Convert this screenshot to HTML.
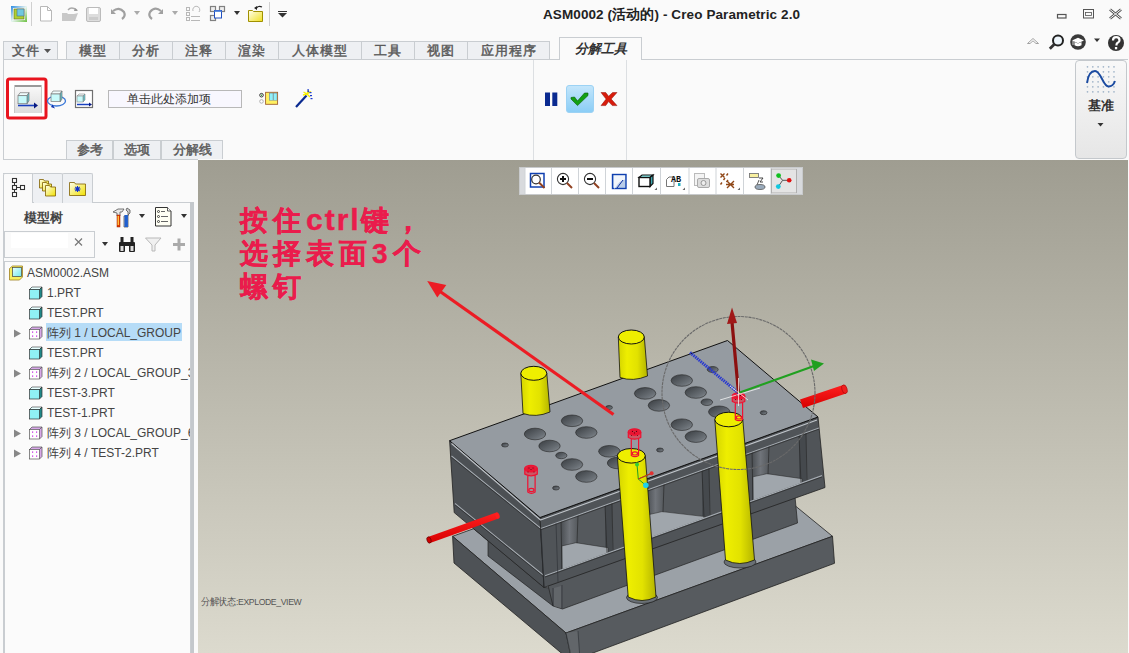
<!DOCTYPE html>
<html><head><meta charset="utf-8">
<style>
*{margin:0;padding:0;box-sizing:border-box}
html,body{width:1129px;height:653px;overflow:hidden;background:#fafafa;font-family:"Liberation Sans",sans-serif;color:#333}
.abs{position:absolute}
.tab{position:absolute;top:41px;height:18px;background:#eef0f3;border-left:1px solid #c9cdd1;border-top:1px solid #c9cdd1;font-size:13px;color:#5a5a5a;text-align:center;line-height:17px;font-weight:normal;-webkit-text-stroke:.45px #5a5a5a;letter-spacing:1px}
.btab{position:absolute;top:140px;height:19px;background:#eef0f3;border:1px solid #c9cdd1;border-bottom:none;font-size:13px;color:#5a5a5a;text-align:center;line-height:18px;font-weight:normal;-webkit-text-stroke:.45px #5a5a5a}
.row{position:absolute;left:0;height:20px;font-size:12px;color:#444;line-height:23px;white-space:nowrap}
</style></head><body>
<!-- title bar -->
<div class="abs" style="left:543px;top:6px;font-size:13.5px;font-weight:bold;color:#222;letter-spacing:.1px;white-space:nowrap">ASM0002 (活动的) - Creo Parametric 2.0</div>

<!-- quick access toolbar -->
<svg class="abs" style="left:0;top:0" width="300" height="30">
 <defs>
  <linearGradient id="gapp" x1="0" y1="0" x2="1" y2="1"><stop offset="0" stop-color="#2a8ae0"/><stop offset=".5" stop-color="#e8f4f0"/><stop offset="1" stop-color="#6cc040"/></linearGradient>
  <linearGradient id="gfold" x1="0" y1="0" x2="1" y2="1"><stop offset="0" stop-color="#fffff0"/><stop offset="1" stop-color="#f0e020"/></linearGradient>
 </defs>
 <rect x="11" y="6" width="16" height="16" fill="url(#gapp)"/>
 <rect x="13" y="8" width="12" height="12" fill="#f4f8f4"/>
 <rect x="14" y="9" width="10" height="10" fill="#b0d030" stroke="#607020" stroke-width=".6"/>
 <rect x="17" y="9" width="7" height="7" fill="#70c8e0" stroke="#507080" stroke-width=".6"/>
 <rect x="31" y="2" width="1" height="24" fill="#d0d0d0"/>
 <path d="M40.5 6.5h7l4 4v10.5h-11z" fill="#fff" stroke="#b8b8b8"/>
 <path d="M47.5 6.5v4h4" fill="none" stroke="#b8b8b8"/>
 <path d="M62 13h5l1 1h6l4 -1-3 8h-13z" fill="#c8c8c8"/>
 <path d="M68 10q3-4 9 0" fill="none" stroke="#aaa" stroke-width="1.3"/><path d="M75 8l3 3l-4 0z" fill="#999"/>
 <rect x="86.5" y="7.5" width="14" height="14" rx="1.5" fill="#ddd" stroke="#bbb"/>
 <rect x="89" y="8" width="9" height="6" fill="#fff"/><rect x="89" y="17" width="9" height="3" fill="#ccc"/>
 <path d="M113 11q6-5 11 1q2 4-2 7" fill="none" stroke="#a0a0a0" stroke-width="2.2"/><path d="M111 9v5h5z" fill="#a0a0a0"/>
 <path d="M134 11h6l-3 4z" fill="#aaa"/>
 <path d="M161 11q-6-5-11 1q-2 4 2 7" fill="none" stroke="#a0a0a0" stroke-width="2.2"/><path d="M163 9v5h-5z" fill="#a0a0a0"/>
 <path d="M172 11h6l-3 4z" fill="#aaa"/>
 <g fill="none" stroke="#b8b8b8" stroke-width="1"><rect x="186.5" y="7.5" width="3" height="3"/><rect x="186.5" y="12.5" width="3" height="3"/><rect x="186.5" y="17.5" width="3" height="3"/><path d="M191 16.5h9M191 20.5h9"/><path d="M193 11a3.5 3.5 0 1 1 6 1"/></g>
 <g fill="#eee" stroke="#808080" stroke-width="1.2"><rect x="210.5" y="6.5" width="5" height="5"/><rect x="219.5" y="6.5" width="5" height="5"/><rect x="210.5" y="15.5" width="5" height="5"/></g>
 <rect x="214.5" y="10.5" width="7" height="7.5" fill="#fff" stroke="#2050c0"/><rect x="214.5" y="10.5" width="7" height="1.5" fill="#6090e0"/>
 <path d="M234 11h6l-3 4z" fill="#333"/>
 <path d="M248.5 10.5h4l1 1h9v10h-14z" fill="url(#gfold)" stroke="#a09000"/>
 <path d="M256 9q2-4 6-2" fill="none" stroke="#222" stroke-width="1.2"/><path d="M254 8l3 -2v4z" fill="#222"/>
 <rect x="269" y="2" width="1" height="24" fill="#d0d0d0"/>
 <rect x="278" y="11" width="9" height="1" fill="#333"/><path d="M278 13h9l-4.5 4.5z" fill="#333"/>
</svg>

<!-- window controls -->
<svg class="abs" style="left:1020px;top:0" width="109" height="60">
 <rect x="37.5" y="14.5" width="8.5" height="3.5" fill="none" stroke="#555" stroke-width="1.2"/>
 <rect x="63.5" y="9.5" width="10" height="8.5" fill="none" stroke="#555"/><rect x="65.5" y="12.5" width="6" height="3" fill="none" stroke="#555" stroke-width=".8"/>
 <path d="M90 9.5l11 9M101 9.5l-11 9" stroke="#555" stroke-width="2.8"/><path d="M90 9.5l11 9M101 9.5l-11 9" stroke="#fafafa" stroke-width="1"/>
 <path d="M7.5 43.5l5.5-5 5.5 5h-2.5l-3-2.7-3 2.7z" fill="#fff" stroke="#999" stroke-width=".9"/>
 <circle cx="38" cy="40.5" r="5" fill="#eef6fc" stroke="#222" stroke-width="2"/><path d="M34.3 44.2l-4.5 4.5" stroke="#333" stroke-width="2.8"/>
 <circle cx="58" cy="42" r="7.8" fill="#3a3a3a"/><path d="M52 40.5l6-2.8 6 2.8-6 2.8z" fill="#fff"/><path d="M54.5 42v3.2q3.5 2 7 0v-3.2l-3.5 1.6z" fill="#fff"/><path d="M53 41v4" stroke="#fff" stroke-width=".8"/>
 <path d="M74 38.5h6l-3 3.5z" fill="#333"/>
 <circle cx="96" cy="43" r="8" fill="#333"/>
 <path d="M93 40.5q0-3.3 3.2-3.3q3.3 0 3.3 3q0 1.7-1.8 2.6q-1.2.6-1.2 2v.7" fill="none" stroke="#fff" stroke-width="2.2"/>
 <rect x="94.9" y="47" width="2.3" height="2.3" fill="#fff"/>
</svg>

<!-- tabs -->
<div class="tab" style="left:3px;width:55px;border-right:1px solid #c9cdd1"><span style="position:relative;left:-5px">文件</span><svg style="position:absolute;left:40px;top:7px" width="8" height="5"><path d="M0 0h7l-3.5 4z" fill="#555"/></svg></div>
<div class="tab" style="left:66px;width:53px">模型</div>
<div class="tab" style="left:119px;width:53px">分析</div>
<div class="tab" style="left:172px;width:53px">注释</div>
<div class="tab" style="left:225px;width:53px">渲染</div>
<div class="tab" style="left:278px;width:83px">人体模型</div>
<div class="tab" style="left:361px;width:53px">工具</div>
<div class="tab" style="left:414px;width:53px">视图</div>
<div class="tab" style="left:467px;width:83px;border-right:1px solid #c9cdd1">应用程序</div>
<div class="abs" style="left:3px;top:59px;width:1125px;height:1px;background:#c9cdd1"></div>
<div class="abs" style="left:559px;top:37px;width:83px;height:23px;background:#fafafa;border:1px solid #c9cdd1;border-bottom:none;font-size:13px;font-style:italic;font-weight:bold;color:#333;text-align:center;line-height:22px">分解工具</div>

<!-- ribbon body -->
<div class="abs" style="left:3px;top:159px;width:195px;height:1px;background:#c9cdd1"></div>
<div class="abs" style="left:3px;top:59px;width:1px;height:101px;background:#c9cdd1"></div>
<div class="abs" style="left:533px;top:60px;width:1px;height:100px;background:#dcdfe2"></div>
<div class="abs" style="left:626px;top:60px;width:1px;height:100px;background:#dcdfe2"></div>
<div class="btab" style="left:66px;width:47px">参考</div>
<div class="btab" style="left:113px;width:48px">选项</div>
<div class="btab" style="left:161px;width:62px">分解线</div>

<svg class="abs" style="left:0;top:60px" width="330" height="100">
 <defs>
  <linearGradient id="gbtn" x1="0" y1="0" x2="0" y2="1"><stop offset="0" stop-color="#fafafa"/><stop offset="1" stop-color="#dcdcdc"/></linearGradient>
 </defs>
 <rect x="7.5" y="19" width="38.5" height="39" rx="2" fill="#fff" stroke="#e8141e" stroke-width="3"/>
 <rect x="14" y="25" width="28" height="28" fill="url(#gbtn)"/>
 <rect x="14" y="25" width="28" height="2" fill="#999"/>
 <rect x="14" y="25" width="1" height="28" fill="#c8c8c8"/><rect x="41" y="25" width="1" height="28" fill="#c8c8c8"/>
 <!-- cube 1 -->
 <g transform="translate(18,32.7)">
  <path d="M0 3l2-3h9l-2 3z" fill="#f0fcfc" stroke="#777" stroke-width=".7"/>
  <path d="M9 3l2-3v8l-2 3z" fill="#60c8d0" stroke="#777" stroke-width=".7"/>
  <rect x="0" y="3" width="9" height="8" fill="#c8fafa" stroke="#777" stroke-width=".7"/>
 </g>
 <path d="M18 45.5h18" stroke="#1840c0" stroke-width="1.6"/><path d="M34 42.5l4 3-4 3z" fill="#0a1a80"/>
 <!-- rotate icon -->
 <ellipse cx="56.5" cy="41" rx="9" ry="5" fill="none" stroke="#3a78d8" stroke-width="1.3"/>
 <g transform="translate(51,31)">
  <path d="M0 3l2-3h9l-2 3z" fill="#f0fcfc" stroke="#777" stroke-width=".7"/>
  <path d="M9 3l2-3v8l-2 3z" fill="#60c8d0" stroke="#777" stroke-width=".7"/>
  <rect x="0" y="3" width="9" height="7.5" fill="#c8fafa" stroke="#777" stroke-width=".7"/>
 </g>
 <path d="M51 47l4 1.5-2.5 -4z" fill="#0a30b0"/>
 <!-- icon 3 -->
 <rect x="75.5" y="30.5" width="17" height="17" fill="#fff" stroke="#707070" stroke-width="1.2"/>
 <g transform="translate(77,34)">
  <path d="M0 2l2-2h6l-2 2z" fill="#f0fcfc" stroke="#888" stroke-width=".6"/>
  <path d="M6 2l2-2v6l-2 2z" fill="#60c8d0" stroke="#888" stroke-width=".6"/>
  <rect x="0" y="2" width="6" height="6" fill="#c8fafa" stroke="#888" stroke-width=".6"/>
 </g>
 <path d="M77 44.5h13" stroke="#1840c0" stroke-width="1.5"/><path d="M89 42.5l3 2-3 2z" fill="#0a1a80"/>
 <!-- input -->
 <rect x="108.5" y="30.5" width="133" height="17" fill="#f8f7fe" stroke="#b8b8b8"/>
 <text x="126.5" y="43" font-size="12" fill="#333" font-family="Liberation Sans">单击此处添加项</text>
 <!-- layer icon -->
 <circle cx="261.5" cy="35.2" r="1.8" fill="#fff" stroke="#222" stroke-width=".9"/><circle cx="261.5" cy="35.2" r=".6" fill="#080"/>
 <circle cx="261.5" cy="41.4" r="1.8" fill="#fff" stroke="#aaa" stroke-width=".9"/>
 <rect x="265.6" y="32.3" width="12" height="12" fill="#fff060" stroke="#a06030" stroke-width=".9"/>
 <rect x="269" y="32.8" width="8.2" height="7.7" fill="#808080"/>
 <rect x="269.6" y="33.4" width="3.2" height="6.8" fill="#90f0f8"/><rect x="273.6" y="33.4" width="3.2" height="6.8" fill="#90f0f8"/>
 <!-- wand -->
 <path d="M296 47l10.5-11.5" stroke="#0a2a90" stroke-width="2.2"/>
 <path d="M307 34l-3.5-2M307 34l-4 1M307 34l1.5-4M307 34l4-2.5M307 34l3 3" stroke="#f8f000" stroke-width="1.4"/>
 <g fill="#1838d0"><rect x="307.5" y="29" width="1.2" height="3"/><rect x="309.5" y="32" width="2" height="1.2"/><rect x="310" y="35" width="2" height="1.2"/><rect x="310.5" y="38" width="2" height="1.2"/><rect x="308" y="31" width="1.2" height="1.2"/></g>
</svg>
<!-- pause/check/x -->
<svg class="abs" style="left:540px;top:80px" width="85" height="40">
 <defs><linearGradient id="gchk" x1="0" y1="0" x2="0" y2="1"><stop offset="0" stop-color="#c4e6fb"/><stop offset="1" stop-color="#8acdf6"/></linearGradient></defs>
 <rect x="5" y="12.5" width="5" height="13.5" fill="#0a2a90"/><rect x="12.3" y="12.5" width="5" height="13.5" fill="#0a2a90"/>
 <rect x="26.5" y="5.5" width="27" height="27" rx="2.5" fill="url(#gchk)" stroke="#9cd2f4"/>
 <path d="M31 17.5L34.5 17L37.5 21L44.5 13L48 13L48 15.5L37.5 25.6L31 19z" fill="#12a012" stroke="#0a5a0a" stroke-width=".6"/>
 <path d="M61 12.5L65.7 12.5L68.6 16.2L72.6 12.5L77 12.5L71.2 19.1L77 25.6L72.3 25.6L68.6 21.6L65.7 25.6L61 25.6L66.1 19.1z" fill="#d81c0c" stroke="#901008" stroke-width=".5"/>
</svg>
<!-- datum button -->
<div class="abs" style="left:1075px;top:60px;width:52px;height:99px;border:1px solid #c4c8cc;border-radius:4px;background:linear-gradient(#f8f8f8,#e6e6e6)"></div>
<svg class="abs" style="left:1075px;top:60px" width="52" height="99">
 <g fill="#a0b4c8"><circle cx="12.5" cy="6.8" r=".85"/><circle cx="17.8" cy="6.8" r=".85"/><circle cx="23.1" cy="6.8" r=".85"/><circle cx="28.4" cy="6.8" r=".85"/><circle cx="33.7" cy="6.8" r=".85"/><circle cx="39.0" cy="6.8" r=".85"/><circle cx="12.5" cy="11.8" r=".85"/><circle cx="17.8" cy="11.8" r=".85"/><circle cx="23.1" cy="11.8" r=".85"/><circle cx="28.4" cy="11.8" r=".85"/><circle cx="33.7" cy="11.8" r=".85"/><circle cx="39.0" cy="11.8" r=".85"/><circle cx="12.5" cy="16.8" r=".85"/><circle cx="17.8" cy="16.8" r=".85"/><circle cx="23.1" cy="16.8" r=".85"/><circle cx="28.4" cy="16.8" r=".85"/><circle cx="33.7" cy="16.8" r=".85"/><circle cx="39.0" cy="16.8" r=".85"/><circle cx="12.5" cy="21.8" r=".85"/><circle cx="17.8" cy="21.8" r=".85"/><circle cx="23.1" cy="21.8" r=".85"/><circle cx="28.4" cy="21.8" r=".85"/><circle cx="33.7" cy="21.8" r=".85"/><circle cx="39.0" cy="21.8" r=".85"/><circle cx="12.5" cy="26.8" r=".85"/><circle cx="17.8" cy="26.8" r=".85"/><circle cx="23.1" cy="26.8" r=".85"/><circle cx="28.4" cy="26.8" r=".85"/><circle cx="33.7" cy="26.8" r=".85"/><circle cx="39.0" cy="26.8" r=".85"/><circle cx="12.5" cy="31.8" r=".85"/><circle cx="17.8" cy="31.8" r=".85"/><circle cx="23.1" cy="31.8" r=".85"/><circle cx="28.4" cy="31.8" r=".85"/><circle cx="33.7" cy="31.8" r=".85"/><circle cx="39.0" cy="31.8" r=".85"/></g>
 <path d="M12 23C13 15.5 16 11 20 11C26 11 28 26.5 33.5 26.5C36.5 26.5 39 24 40 21" fill="none" stroke="#1a4aa0" stroke-width="1.9"/>
 <text x="25.5" y="49.5" text-anchor="middle" font-size="13" font-weight="bold" fill="#333" font-family="Liberation Sans">基准</text>
 <path d="M22.5 63h6l-3 3.5z" fill="#333"/>
</svg>

<!-- left panel -->
<div class="abs" style="left:0;top:160px;width:198px;height:493px;background:#fafafa"></div>
<!-- panel tabs -->
<div class="abs" style="left:32px;top:173px;width:31px;height:30px;background:#eef0f3;border:1px solid #c9cdd1;border-bottom:none;border-radius:2px 2px 0 0"></div>
<div class="abs" style="left:62px;top:173px;width:31px;height:30px;background:#eef0f3;border:1px solid #c9cdd1;border-bottom:none;border-radius:2px 2px 0 0"></div>
<div class="abs" style="left:92px;top:202px;width:100px;height:1px;background:#c9cdd1"></div>
<div class="abs" style="left:3px;top:173px;width:30px;height:480px;background:#fafafa;border:1px solid #c9cdd1;border-bottom:none;border-right:none;border-radius:2px 0 0 0"></div>
<div class="abs" style="left:3px;top:173px;width:30px;height:1px;background:#c9cdd1"></div>
<div class="abs" style="left:32px;top:174px;width:1px;height:29px;background:#c9cdd1"></div>
<div class="abs" style="left:33px;top:202px;width:1px;height:1px;background:#c9cdd1"></div>
<div class="abs" style="left:190px;top:202px;width:4px;height:451px;background:#c4c8cc"></div>
<svg class="abs" style="left:0;top:170px" width="198" height="95">
 <defs><linearGradient id="gfy" x1="0" y1="0" x2="1" y2="1"><stop offset="0" stop-color="#fffff0"/><stop offset="1" stop-color="#f0e000"/></linearGradient></defs>
 <!-- tree icon -->
 <g fill="#fff" stroke="#333" stroke-width="1.1"><rect x="12.5" y="8.5" width="4" height="4"/><rect x="12.5" y="15.5" width="4" height="4"/><rect x="12.5" y="22.5" width="4" height="4"/><rect x="20.5" y="15.5" width="4" height="4"/></g>
 <path d="M14.5 12.5v3M14.5 19.5v3M16.5 17.5h4" stroke="#333" stroke-width="1"/>
 <!-- folders -->
 <g stroke="#806000" stroke-width=".8" fill="url(#gfy)">
  <path d="M39.5 9.5h4l1 1.5h4v7h-9z"/><path d="M42.5 12.5h4l1 1.5h4v7h-9z"/><path d="M45.5 15.5h4l1 1.5h5v9h-10z"/>
  <path d="M69.5 12.5h5l1 1.5h10v11.5h-16z"/>
 </g>
 <path d="M77.5 16v6M74.5 19h6M75.3 16.8l4.4 4.4M79.7 16.8l-4.4 4.4" stroke="#1030d0" stroke-width="1.1"/>
 <text x="24" y="52" font-size="13" font-weight="bold" fill="#444" font-family="Liberation Sans">模型树</text>
 <!-- tools icon -->
 <path d="M113 42l5-3h6l-2 3h-2v4h-3v-3z" fill="#e8e8e8" stroke="#555" stroke-width=".8"/>
 <rect x="117" y="45" width="3" height="12" fill="#e04000" stroke="#a02000" stroke-width=".5"/>
 <rect x="117.6" y="46" width="1.4" height="9" fill="#ffc040"/>
 <path d="M124 46h4v-4l-2-2 1-2 3 2 0 3-2 2v12h-4z" fill="#ccc" stroke="#555" stroke-width=".8"/>
 <rect x="124.5" y="45" width="3.4" height="12" fill="#2060d0"/>
 <path d="M139 44h6l-3 4z" fill="#333"/>
 <path d="M155.5 37.5h12l3.5 3.5v15h-15.5z" fill="#fffff4" stroke="#333" stroke-width="1"/>
 <path d="M167.5 37.5v3.5h3.5" fill="#fff" stroke="#333" stroke-width=".8"/>
 <g fill="none" stroke="#333" stroke-width=".9"><circle cx="158.5" cy="41.5" r="1"/><circle cx="158.5" cy="46.5" r="1"/><circle cx="158.5" cy="51.5" r="1"/></g>
 <path d="M161 41.5h4M161 46.5h7M161 51.5h7" stroke="#666" stroke-width="1"/>
 <path d="M181 44h6l-3 4z" fill="#333"/>
 <!-- search -->
 <rect x="4.5" y="61.5" width="90" height="26" fill="#fafafa" stroke="#c9cdd1"/>
 <rect x="11" y="63" width="57" height="15" fill="#fff"/>
 <path d="M75 68.5l7 7M82 68.5l-7 7" stroke="#777" stroke-width="1.2"/>
 <path d="M102 72h6l-3 4z" fill="#333"/>
 <!-- binoculars -->
 <g fill="#222"><rect x="119" y="72" width="6" height="10" rx="1"/><rect x="129" y="72" width="6" height="10" rx="1"/><rect x="120.5" y="67" width="3" height="6"/><rect x="130.5" y="67" width="3" height="6"/><rect x="124" y="72" width="6" height="4"/></g>
 <rect x="120.5" y="76" width="3" height="5" fill="#ddd"/><rect x="130.5" y="76" width="3" height="5" fill="#ddd"/>
 <path d="M145.5 68h15.5l-6 7v6l-3 0v-6z" fill="#f0f0f0" stroke="#b8b8b8" stroke-width="1"/>
 <path d="M173 74.5h12M179 68.5v12" stroke="#aaa" stroke-width="3"/>
</svg>
<!-- tree box -->
<div class="abs" style="left:4px;top:261px;width:187px;height:392px;background:#fbfbfb;border:1px solid #c9cdd1;border-bottom:none"></div>
<div class="abs" style="left:46px;top:323px;width:136px;height:18px;background:#b6dcf7"></div>
<svg class="abs" style="left:0;top:262px" width="190" height="200">
 <defs>
  <linearGradient id="gcy" x1="0" y1="0" x2="1" y2="1"><stop offset="0" stop-color="#e8ffff"/><stop offset="1" stop-color="#70e8f0"/></linearGradient>
 </defs>
 <!-- asm icon -->
 <path d="M9.5 6.5l3-2.5h10v11l-3 3h-10z" fill="#f8f060" stroke="#a08020" stroke-width=".8"/>
 <rect x="12.5" y="5.5" width="9" height="9" fill="url(#gcy)" stroke="#404040" stroke-width=".7"/>
 <g id="prt">
  <path d="M29.5 27.5l2.5-2.5h10v9.5l-2.5 2.5z" fill="#208888"/>
  <path d="M29.5 27.5l2.5-2.5h10l-2.5 2.5z" fill="#e8ffff" stroke="#333" stroke-width=".6"/>
  <rect x="29.5" y="27.5" width="10" height="9.5" fill="#90f0f4" stroke="#333" stroke-width=".7"/>
  <path d="M39.5 27.5l2.5-2.5v9.5l-2.5 2.5" fill="none" stroke="#333" stroke-width=".7"/>
 </g>
 <use href="#prt" y="20"/><use href="#prt" y="60"/><use href="#prt" y="100"/><use href="#prt" y="120"/>
 <g id="grp">
  <path d="M29.5 67.5l2.5-2.5h10v9.5l-2.5 2.5z" fill="#d8a8e8"/>
  <rect x="29.5" y="67.5" width="10" height="9.5" fill="#fff" stroke="#555" stroke-width=".7"/>
  <path d="M39.5 67.5l2.5-2.5h-10l-2.5 2.5M39.5 77l2.5-2.5v-9.5" fill="none" stroke="#555" stroke-width=".7"/>
  <g fill="#c020e0"><rect x="32" y="69.5" width="1.2" height="1.2"/><rect x="36" y="69.5" width="1.2" height="1.2"/><rect x="32" y="73.5" width="1.2" height="1.2"/><rect x="36" y="73.5" width="1.2" height="1.2"/></g>
  <path d="M14 67.5v8l7-4z" fill="#888"/>
 </g>
 <use href="#grp" y="40"/><use href="#grp" y="100"/><use href="#grp" y="120"/>
</svg>
<div class="row" style="left:27px;top:262px">ASM0002.ASM</div>
<div class="row" style="left:47px;top:282px">1.PRT</div>
<div class="row" style="left:47px;top:302px">TEST.PRT</div>
<div class="row" style="left:47px;top:322px">阵列 1 / LOCAL_GROUP</div>
<div class="row" style="left:47px;top:342px">TEST.PRT</div>
<div class="row" style="left:47px;top:362px;width:143px;overflow:hidden">阵列 2 / LOCAL_GROUP_3</div>
<div class="row" style="left:47px;top:382px">TEST-3.PRT</div>
<div class="row" style="left:47px;top:402px">TEST-1.PRT</div>
<div class="row" style="left:47px;top:422px;width:143px;overflow:hidden">阵列 3 / LOCAL_GROUP_6</div>
<div class="row" style="left:47px;top:442px">阵列 4 / TEST-2.PRT</div>


<!-- viewport -->
<div class="abs" style="left:198px;top:160px;width:930px;height:493px;background:linear-gradient(#9f9d91,#dcdace)"></div>

<div class="abs" style="left:519px;top:167px;width:284px;height:28px;background:#d8dadd;border:1px solid #c8cacc"></div>
<div class="abs" style="left:525px;top:168px;width:272px;height:26px;background:#fff"></div>
<svg class="abs" style="left:519px;top:167px" width="284" height="28">
 <g fill="#d0d4d8"><rect x="5.5" y="1" width="1" height="26"/><rect x="32" y="1" width="1" height="26"/><rect x="59" y="1" width="1" height="26"/><rect x="86" y="1" width="1" height="26"/><rect x="113" y="1" width="1" height="26"/><rect x="141" y="1" width="1" height="26"/><rect x="169.5" y="1" width="1" height="26"/><rect x="196.5" y="1" width="1" height="26"/><rect x="224" y="1" width="1" height="26"/><rect x="251.5" y="1" width="1" height="26"/></g>
 <rect x="252.5" y="2" width="25" height="24" fill="#e4e4e4" stroke="#b0b0b0"/>
 <!-- zoom window -->
 <rect x="11.5" y="6.5" width="13.5" height="13.5" fill="#fff" stroke="#1040b0" stroke-width="1.5"/>
 <circle cx="17" cy="12.5" r="4.3" fill="none" stroke="#333" stroke-width="1.2"/>
 <path d="M20 15.5l5.5 5.5" stroke="#904020" stroke-width="2"/>
 <!-- zoom in -->
 <circle cx="44" cy="12" r="5.6" fill="#fff" stroke="#333" stroke-width="1.1"/>
 <path d="M41 12h6M44 9v6" stroke="#111" stroke-width="2"/>
 <path d="M48 16l5 5" stroke="#904020" stroke-width="2"/>
 <!-- zoom out -->
 <circle cx="71" cy="12" r="5.6" fill="#fff" stroke="#333" stroke-width="1.1"/>
 <path d="M68 12h6" stroke="#111" stroke-width="2"/>
 <path d="M75 16l5 5" stroke="#904020" stroke-width="2"/>
 <!-- refit -->
 <rect x="93.5" y="7.5" width="13.5" height="14" fill="#b8cce8" stroke="#1040b0" stroke-width="1.4"/>
 <path d="M95 8.5h11v4q-6 1-10 9h-1z" fill="#fff" opacity=".8"/>
 <path d="M98 21l6-8" stroke="#1030a0" stroke-width="1"/>
 <!-- cube -->
 <path d="M120 10.5l3-2.5h11l-3 2.5z" fill="#90f0f0" stroke="#111" stroke-width="1.2"/>
 <path d="M131 10.5l3-2.5v8.5l-3 3z" fill="#40a8b0" stroke="#111" stroke-width="1.2"/>
 <rect x="120" y="10.5" width="11" height="9" fill="#fff" stroke="#111" stroke-width="1.4"/>
 <path d="M138 23h-2.5l2.5-2.5z" fill="#666"/>
 <!-- AB -->
 <path d="M147.5 12.5l2.5-2.5h5v9.5h-7.5z" fill="#fff" stroke="#777" stroke-width="1"/>
 <rect x="159" y="16" width="2.5" height="3" fill="#20b0c0"/>
 <text x="152" y="15" font-size="8.5" font-family="Liberation Mono" fill="#111" font-weight="bold">AB</text>
 <path d="M166 23h-2.5l2.5-2.5z" fill="#666"/>
 <!-- camera -->
 <rect x="175.5" y="6.5" width="10" height="12" fill="#f4f4f4" stroke="#bbb"/>
 <rect x="178.5" y="11.5" width="12" height="9" rx="1.5" fill="#ddd" stroke="#aaa"/>
 <circle cx="184.5" cy="16" r="2.5" fill="#eee" stroke="#999"/>
 <!-- points -->
 <g stroke="#904818" stroke-width="1.4"><path d="M201.5 6.5l4 4M205.5 6.5l-4 4"/><path d="M209 6.5l-1.5 2M206 11l-1.5 2M203 15.5l-1.5 2M209 13l-1.5 2"/><path d="M208 14l7 7M215 14l-7 7M207 17.5h8"/></g>
 <path d="M221 23h-2.5l2.5-2.5z" fill="#666"/>
 <!-- annotation -->
 <rect x="230.5" y="6.5" width="9" height="4" fill="#f8f0a0" stroke="#777" stroke-width=".9"/>
 <path d="M240 11h4l-3 4h3" fill="none" stroke="#333" stroke-width=".9"/>
 <path d="M240 13l-2 5" stroke="#333" stroke-width=".8"/>
 <ellipse cx="241" cy="20" rx="5" ry="2.5" fill="#9ab" stroke="#555" stroke-width=".8"/>
 <!-- spin center -->
 <path d="M259.6 8.6l4 4.7 6.5 0M263.6 13.3l-4.3 6.3" fill="none" stroke="#555" stroke-width="1"/>
 <circle cx="259.6" cy="8.6" r="2.4" fill="#10c020"/>
 <circle cx="270.2" cy="13.3" r="2.3" fill="#e01010"/>
 <circle cx="259.3" cy="19.6" r="2.4" fill="#10c8e0"/>
</svg>

<svg class="abs" style="left:0;top:0" width="1129" height="653">
 <defs>
  <clipPath id="vp"><rect x="198" y="160" width="930" height="493"/></clipPath>
  <linearGradient id="gpin" x1="0" y1="0" x2="1" y2="0"><stop offset="0" stop-color="#d4d400"/><stop offset=".3" stop-color="#eeee00"/><stop offset=".65" stop-color="#e2e200"/><stop offset="1" stop-color="#b4b400"/></linearGradient>
  <linearGradient id="ghole" x1="0" y1="0" x2="1" y2="1"><stop offset="0" stop-color="#383c40"/><stop offset=".7" stop-color="#6a7076"/><stop offset="1" stop-color="#8a9096"/></linearGradient>
  <linearGradient id="grod" x1="0" y1="0" x2="0" y2="1"><stop offset="0" stop-color="#ff2020"/><stop offset="1" stop-color="#d80000"/></linearGradient>
  <linearGradient id="gwall" x1="0" y1="0" x2="1" y2="0"><stop offset="0" stop-color="#4a4e52"/><stop offset=".5" stop-color="#70747a"/><stop offset="1" stop-color="#54585c"/></linearGradient>
 </defs>
 <g clip-path="url(#vp)" stroke-linejoin="round">
  <path d="M452.6 536.3L716 441L832.5 536.3L566 633z" fill="#9ba1a7" stroke="#222" stroke-width=".8"/>
  <path d="M452.6 536.3L566 633L572 662L454 563z" fill="#4e5256" stroke="#222" stroke-width=".8"/>
  <path d="M566 633L832.5 536.3L834.5 563.3L574 660z" fill="#575b5f" stroke="#222" stroke-width=".8"/>
  <path d="M566 633l12 -2l2 29h-8z" fill="#62666a"/><path d="M566 633L572 660M578 631L580 660" fill="none" stroke="#2a2e32" stroke-width=".6"/>
  <path d="M474 528.7L544 587.5L553 588L553 606L488 556L488 541z" fill="#4c5054" stroke="#222" stroke-width=".7"/>
  <path d="M548 585L795 496.6L797.5 523L562.5 609L553 606z" fill="#54585c" stroke="#222" stroke-width=".7"/>
  <path d="M553 588v18M562 585v24" fill="none" stroke="#2a2e32" stroke-width=".6"/>
  <path d="M554 588l7-2v22l-7-2z" fill="#62666a"/>
  <path d="M449.6 440.7L540 517.5L544 587.5L454.2 512.6z" fill="#4c5054" stroke="#222" stroke-width=".8"/>
  <path d="M451.5 456L541 528.5M455 503.5L545 576.5" stroke="#a4aab0" stroke-width="1.1"/>
  <path d="M451.5 457.3L541 529.8M455 504.8L545 577.8" stroke="#222" stroke-width=".6"/>
  <path d="M540 517.5 L818 417 L825 487.5 L544 587.5z" fill="#505458" stroke="#222" stroke-width=".8"/>
  <path d="M561.0 521.2L612.0 502.8L612.0 551.5L561.0 569.9z" fill="#55595d"/>
  <path d="M561.0 521.2L578.0 515.1L578.0 563.8L561.0 569.9z" fill="url(#gwall)"/>
  <path d="M605.0 505.3L612.0 502.8L612.0 551.5L605.0 554.0z" fill="#45494d"/>
  <path d="M562.0 569.6L562.0 545.9L576.0 542.7L608.0 547.7L608.0 552.9z" fill="#a0a6ac" stroke="#222" stroke-width=".5"/>
  <path d="M561.0 521.2L562.0 569.9M578.0 515.1L577.0 543.2M605.0 505.3L607.0 553.3M612.0 502.8L613.0 551.1" stroke="#222" stroke-width=".6"/>
  <path d="M647.0 490.1L709.0 467.7L709.0 516.4L647.0 538.8z" fill="#55595d"/>
  <path d="M647.0 490.1L664.0 484.0L664.0 532.7L647.0 538.8z" fill="url(#gwall)"/>
  <path d="M702.0 470.2L709.0 467.7L709.0 516.4L702.0 518.9z" fill="#45494d"/>
  <path d="M648.0 538.5L648.0 514.8L662.0 511.6L705.0 516.6L705.0 517.9z" fill="#a0a6ac" stroke="#222" stroke-width=".5"/>
  <path d="M647.0 490.1L648.0 538.8M664.0 484.0L663.0 512.1M702.0 470.2L704.0 518.2M709.0 467.7L710.0 516.1" stroke="#222" stroke-width=".6"/>
  <path d="M752.0 452.2L806.0 432.6L806.0 481.3L752.0 500.9z" fill="#55595d"/>
  <path d="M752.0 452.2L769.0 446.0L769.0 494.7L752.0 500.9z" fill="url(#gwall)"/>
  <path d="M799.0 435.2L806.0 432.6L806.0 481.3L799.0 483.9z" fill="#45494d"/>
  <path d="M753.0 500.5L753.0 476.8L767.0 473.7L802.0 478.7L802.0 482.8z" fill="#a0a6ac" stroke="#222" stroke-width=".5"/>
  <path d="M752.0 452.2L753.0 500.9M769.0 446.0L768.0 474.2M799.0 435.2L801.0 483.2M806.0 432.6L807.0 481.0" stroke="#222" stroke-width=".6"/>
  <path d="M541.0 528.4L819.0 427.9" stroke="#a4aab0" stroke-width="1.1"/>
  <path d="M541.0 529.6L819.0 429.1" stroke="#222" stroke-width=".6"/>
  <path d="M545.0 575.7L822.0 475.6" stroke="#a4aab0" stroke-width="1.2"/>
  <path d="M545.0 577.0L822.0 476.9" stroke="#222" stroke-width=".6"/>
  <path d="M541 528.5L544 587M556 523.5L558 582" stroke="#2a2e32" stroke-width=".6"/>
  <path d="M449.6 440.7L727.5 340.5L818 417L540 517.5z" fill="#959ba1" stroke="#111" stroke-width="1"/>
  <path d="M451.5 443.5L540.5 520L817 420" fill="none" stroke="#c0c5ca" stroke-width="1.1"/>
  <!-- holes -->
  <g fill="url(#ghole)" stroke="#222" stroke-width=".6">
   <ellipse cx="535" cy="434" rx="10.7" ry="5.8"/><ellipse cx="572" cy="420.8" rx="10.7" ry="5.8"/>
   <ellipse cx="586.3" cy="432.5" rx="10.7" ry="5.8"/><ellipse cx="549.5" cy="446" rx="10.7" ry="5.8"/>
   <ellipse cx="561.3" cy="455.5" rx="5.6" ry="3.2"/><ellipse cx="572" cy="464.5" rx="10.7" ry="5.8"/>
   <ellipse cx="586.3" cy="476.5" rx="10.7" ry="5.8"/><ellipse cx="609.3" cy="451.3" rx="10.7" ry="5.8"/>
   <ellipse cx="618" cy="463" rx="10.7" ry="5.8"/>
   <ellipse cx="645.1" cy="393.4" rx="10.7" ry="5.8"/><ellipse cx="681.8" cy="380.5" rx="10.7" ry="5.8"/>
   <ellipse cx="695.8" cy="392.5" rx="10.7" ry="5.8"/><ellipse cx="658.9" cy="405.4" rx="10.7" ry="5.8"/>
   <ellipse cx="706.8" cy="402.2" rx="5.8" ry="3.3"/><ellipse cx="719.2" cy="411.8" rx="10.7" ry="5.8"/>
   <ellipse cx="681.8" cy="424.7" rx="10.7" ry="5.8"/><ellipse cx="695.8" cy="436.6" rx="10.7" ry="5.8"/>
   <ellipse cx="712.7" cy="369.5" rx="5.5" ry="3"/>
   <ellipse cx="505" cy="445" rx="3.4" ry="2"/><ellipse cx="609" cy="407.5" rx="3.4" ry="2"/>
   <ellipse cx="660" cy="450" rx="3.4" ry="2"/><ellipse cx="556" cy="488" rx="3.4" ry="2"/>
   <ellipse cx="763.6" cy="412.7" rx="3.4" ry="2"/>
  </g>
  <!-- back pins -->
  <path d="M520.8 373.3L523 413.5Q536 418 550 412L546.8 373.3z" fill="url(#gpin)" stroke="#111" stroke-width=".8"/>
  <ellipse cx="533.8" cy="373.3" rx="13" ry="7" fill="#eeee00" stroke="#111" stroke-width="1"/>
  <path d="M618.3 337L620 377.5Q633 382 647.5 376L644.3 337z" fill="url(#gpin)" stroke="#111" stroke-width=".8"/>
  <ellipse cx="631.3" cy="337" rx="13" ry="7" fill="#eeee00" stroke="#111" stroke-width="1"/>
  <!-- rods -->
  <path d="M430.1 543.1L498.6 518.6L496.4 512.4L427.9 536.9z" fill="url(#grod)"/><ellipse cx="497.5" cy="515.5" rx="2" ry="3.3" transform="rotate(-19.7 497.5 515.5)" fill="#ff2020"/><ellipse cx="429" cy="540" rx="2" ry="3.3" transform="rotate(-19.7 429 540)" fill="#d00000" stroke="#500" stroke-width=".6"/>
  <path d="M800 399.5L843 385L846 393.5L803 408z" fill="url(#grod)"/><ellipse cx="844.5" cy="389.2" rx="2.6" ry="4.5" transform="rotate(-18 844.5 389.2)" fill="#f02020" stroke="#900" stroke-width=".5"/>
  <!-- front pins -->
  <ellipse cx="642" cy="597.5" rx="15.5" ry="6" fill="#6a7076" stroke="#222" stroke-width=".7"/>
  <ellipse cx="740" cy="562" rx="16" ry="6" fill="#6a7076" stroke="#222" stroke-width=".7"/>
  <path d="M617.3 455.8L628.2 597Q642 604 656 597L645.3 455.8z" fill="url(#gpin)" stroke="#111" stroke-width=".8"/>
  <ellipse cx="631.3" cy="455.8" rx="14" ry="7.3" fill="#eeee00" stroke="#111" stroke-width="1"/>
  <path d="M714.8 419.5L725.5 560Q739.5 567 754.5 560L742.8 419.5z" fill="url(#gpin)" stroke="#111" stroke-width=".8"/>
  <ellipse cx="728.8" cy="419.5" rx="14" ry="7.3" fill="#eeee00" stroke="#111" stroke-width="1"/>
  <!-- red screws -->
  <g id="scr">
   <path d="M524.8 468.6v5.5q6.2 3.4 12.5 0v-5.5z" fill="#f0283c" opacity=".6"/>
   <ellipse cx="531" cy="468.6" rx="6.3" ry="3.2" fill="#e8102a" opacity=".8"/>
   <g fill="none" stroke="#f01030" stroke-width="1.2">
    <ellipse cx="531" cy="468.6" rx="6.3" ry="3.2"/><ellipse cx="531" cy="468.6" rx="3.5" ry="1.8"/>
    <path d="M524.8 468.6v5.5q6.2 3.4 12.5 0v-5.5M527.8 475.5v16.5q3.6 2.6 7.3 0v-16.5"/><ellipse cx="531.4" cy="490" rx="2.6" ry="1.6"/>
   </g>
   <g fill="#600010"><circle cx="529" cy="468" r=".6"/><circle cx="533" cy="468" r=".6"/><circle cx="531" cy="469.5" r=".6"/><circle cx="528" cy="472" r=".5"/><circle cx="534" cy="472" r=".5"/></g>
  </g>
  <use href="#scr" x="103.5" y="-36.6"/>
  <use href="#scr" x="207.5" y="-72.6"/>
  <!-- triad near pin3 -->
  <path d="M637 464.5L638.3 479L651.6 473.3M638.3 479L645.8 485.3" fill="none" stroke="#20a020" stroke-width="1"/>
  <path d="M638.3 479L651.6 473.3" stroke="#e02020" stroke-width="1"/>
  <circle cx="637" cy="464.5" r="2" fill="#30d030"/><circle cx="651.6" cy="473.3" r="2" fill="#e03030"/><circle cx="645.8" cy="485.3" r="2.8" fill="#20d0e8"/>
  <!-- dragger -->
  <circle cx="738.5" cy="393" r="76.5" fill="none" stroke="#6a6a6a" stroke-width="1.1" stroke-dasharray="3 .7"/>
  <path d="M690 352.5L738.5 393" stroke="#2838d0" stroke-width="3" stroke-dasharray="1.5 .8"/>
  <path d="M738.5 393L732 322" stroke="#8c1010" stroke-width="3.2"/>
  <path d="M727 324L732 307.5L737 323z" fill="#a01818"/>
  <path d="M738.5 393L814 366" stroke="#20a020" stroke-width="2.2"/>
  <path d="M811 359.5L824 363.5L814 371z" fill="#20a020"/>
  <path d="M720 400L760 388M738.5 378v28M730 386l18 14" stroke="#fff" stroke-width=".8" opacity=".9"/>
 </g>
 <!-- annotation arrow -->
 <path d="M613.5 414.5L438 290" stroke="#ec1c24" stroke-width="3.2"/>
 <path d="M427.2 281L446.3 285L437.3 297.5z" fill="#ec1c24"/>
</svg>
<div class="abs" style="left:201px;top:596px;font-size:9.5px;color:#555;letter-spacing:-.4px;white-space:nowrap;transform:scaleX(.91);transform-origin:0 0">分解状态:EXPLODE_VIEW</div>
<div class="abs" style="left:240px;top:203px;font-size:28px;line-height:33px;font-weight:900;color:#ea1c4c;white-space:nowrap;letter-spacing:5px;-webkit-text-stroke:.4px #ea1c4c">按住<span style="letter-spacing:2px;font-size:30px">ctrl</span>键，<br>选择表面3个<br>螺钉</div>

</body></html>
